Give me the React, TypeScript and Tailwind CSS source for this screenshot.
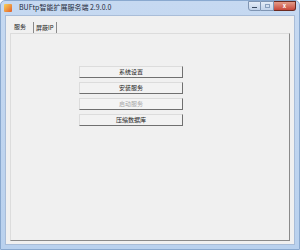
import React from 'react';

const font = { fontFamily: '"Noto Sans CJK SC", "Liberation Sans", sans-serif' };

function WinButton({ label, disabled }: { label: string; disabled?: boolean }) {
  return (
    <div
      className={`w-[104px] h-[12px] flex items-center justify-center text-[6px] leading-none border border-t-[#dcdcdc] border-l-[#dcdcdc] border-r-[#707070] border-b-[#707070] ${
        disabled ? 'bg-[#f4f4f4] text-[#a8a8a8]' : 'bg-[#f2f2f2] text-[#222]'
      }`}
    >
      {label}
    </div>
  );
}

export default function App() {
  return (
    <div className="w-[300px] h-[250px] bg-white" style={font}>
      <div className="w-[300px] h-[250px] flex flex-col bg-gradient-to-b from-[#c6d9f1] to-[#b9d1ee] rounded-t-[5px] border border-[#8aa9cf]">
        {/* title bar */}
        <div className="h-[13px] flex items-start shrink-0">
          <div className="w-[8px] h-[8px] mt-[3px] ml-[3px] rounded-[1px] bg-gradient-to-br from-[#f5d35a] to-[#e05a2a]" />
          <span className="ml-[7px] mt-[2px] text-[7px] leading-[9px] text-[#1e2a3a]">BUFtp智能扩展服务端 2.9.0.0</span>
          <div className="ml-auto mr-[3px] flex h-[10px]">
            <div className="w-[13px] border border-[#7f95b3] bg-gradient-to-b from-[#e4ecf7] to-[#c2d3ea] rounded-bl-[3px] flex items-end justify-center pb-[2px]">
              <div className="w-[5px] h-[1px] bg-[#3a4a60]" />
            </div>
            <div className="w-[13px] border-y border-r border-[#7f95b3] bg-gradient-to-b from-[#e4ecf7] to-[#c2d3ea] flex items-center justify-center">
              <div className="w-[5px] h-[4px] border border-[#8aa0be]" />
            </div>
            <div className="w-[22px] border-y border-r border-[#6b2a20] bg-gradient-to-b from-[#e39a88] to-[#c7463a] rounded-br-[3px] flex items-center justify-center text-white text-[6px] font-bold leading-none">
              x
            </div>
          </div>
        </div>
        {/* client */}
        <div className="flex-1 mx-[4px] mb-[4px] mt-[1px] bg-[#f0f0f0] border border-[#a9bdd8] flex flex-col px-[4px] pt-[4px] pb-[3px]">
          <div className="flex items-end h-[13px] text-[6px] leading-none text-[#222]">
            <div className="h-[13px] px-[4px] flex items-center bg-[#f0f0f0]">服务</div>
            <div className="h-[11px] px-[2px] flex items-center border-l border-r border-[#8a8a8a] ml-[3px]">屏蔽IP</div>
          </div>
          <div className="flex-1 border border-t-[#dcdcdc] border-l-[#dcdcdc] border-r-[#8a8a8a] border-b-[#8a8a8a] flex flex-col items-start pl-[68px] pt-[32px] gap-[4px]">
            <WinButton label="系统设置" />
            <WinButton label="安装服务" />
            <WinButton label="启动服务" disabled />
            <WinButton label="压缩数据库" />
          </div>
        </div>
      </div>
    </div>
  );
}
